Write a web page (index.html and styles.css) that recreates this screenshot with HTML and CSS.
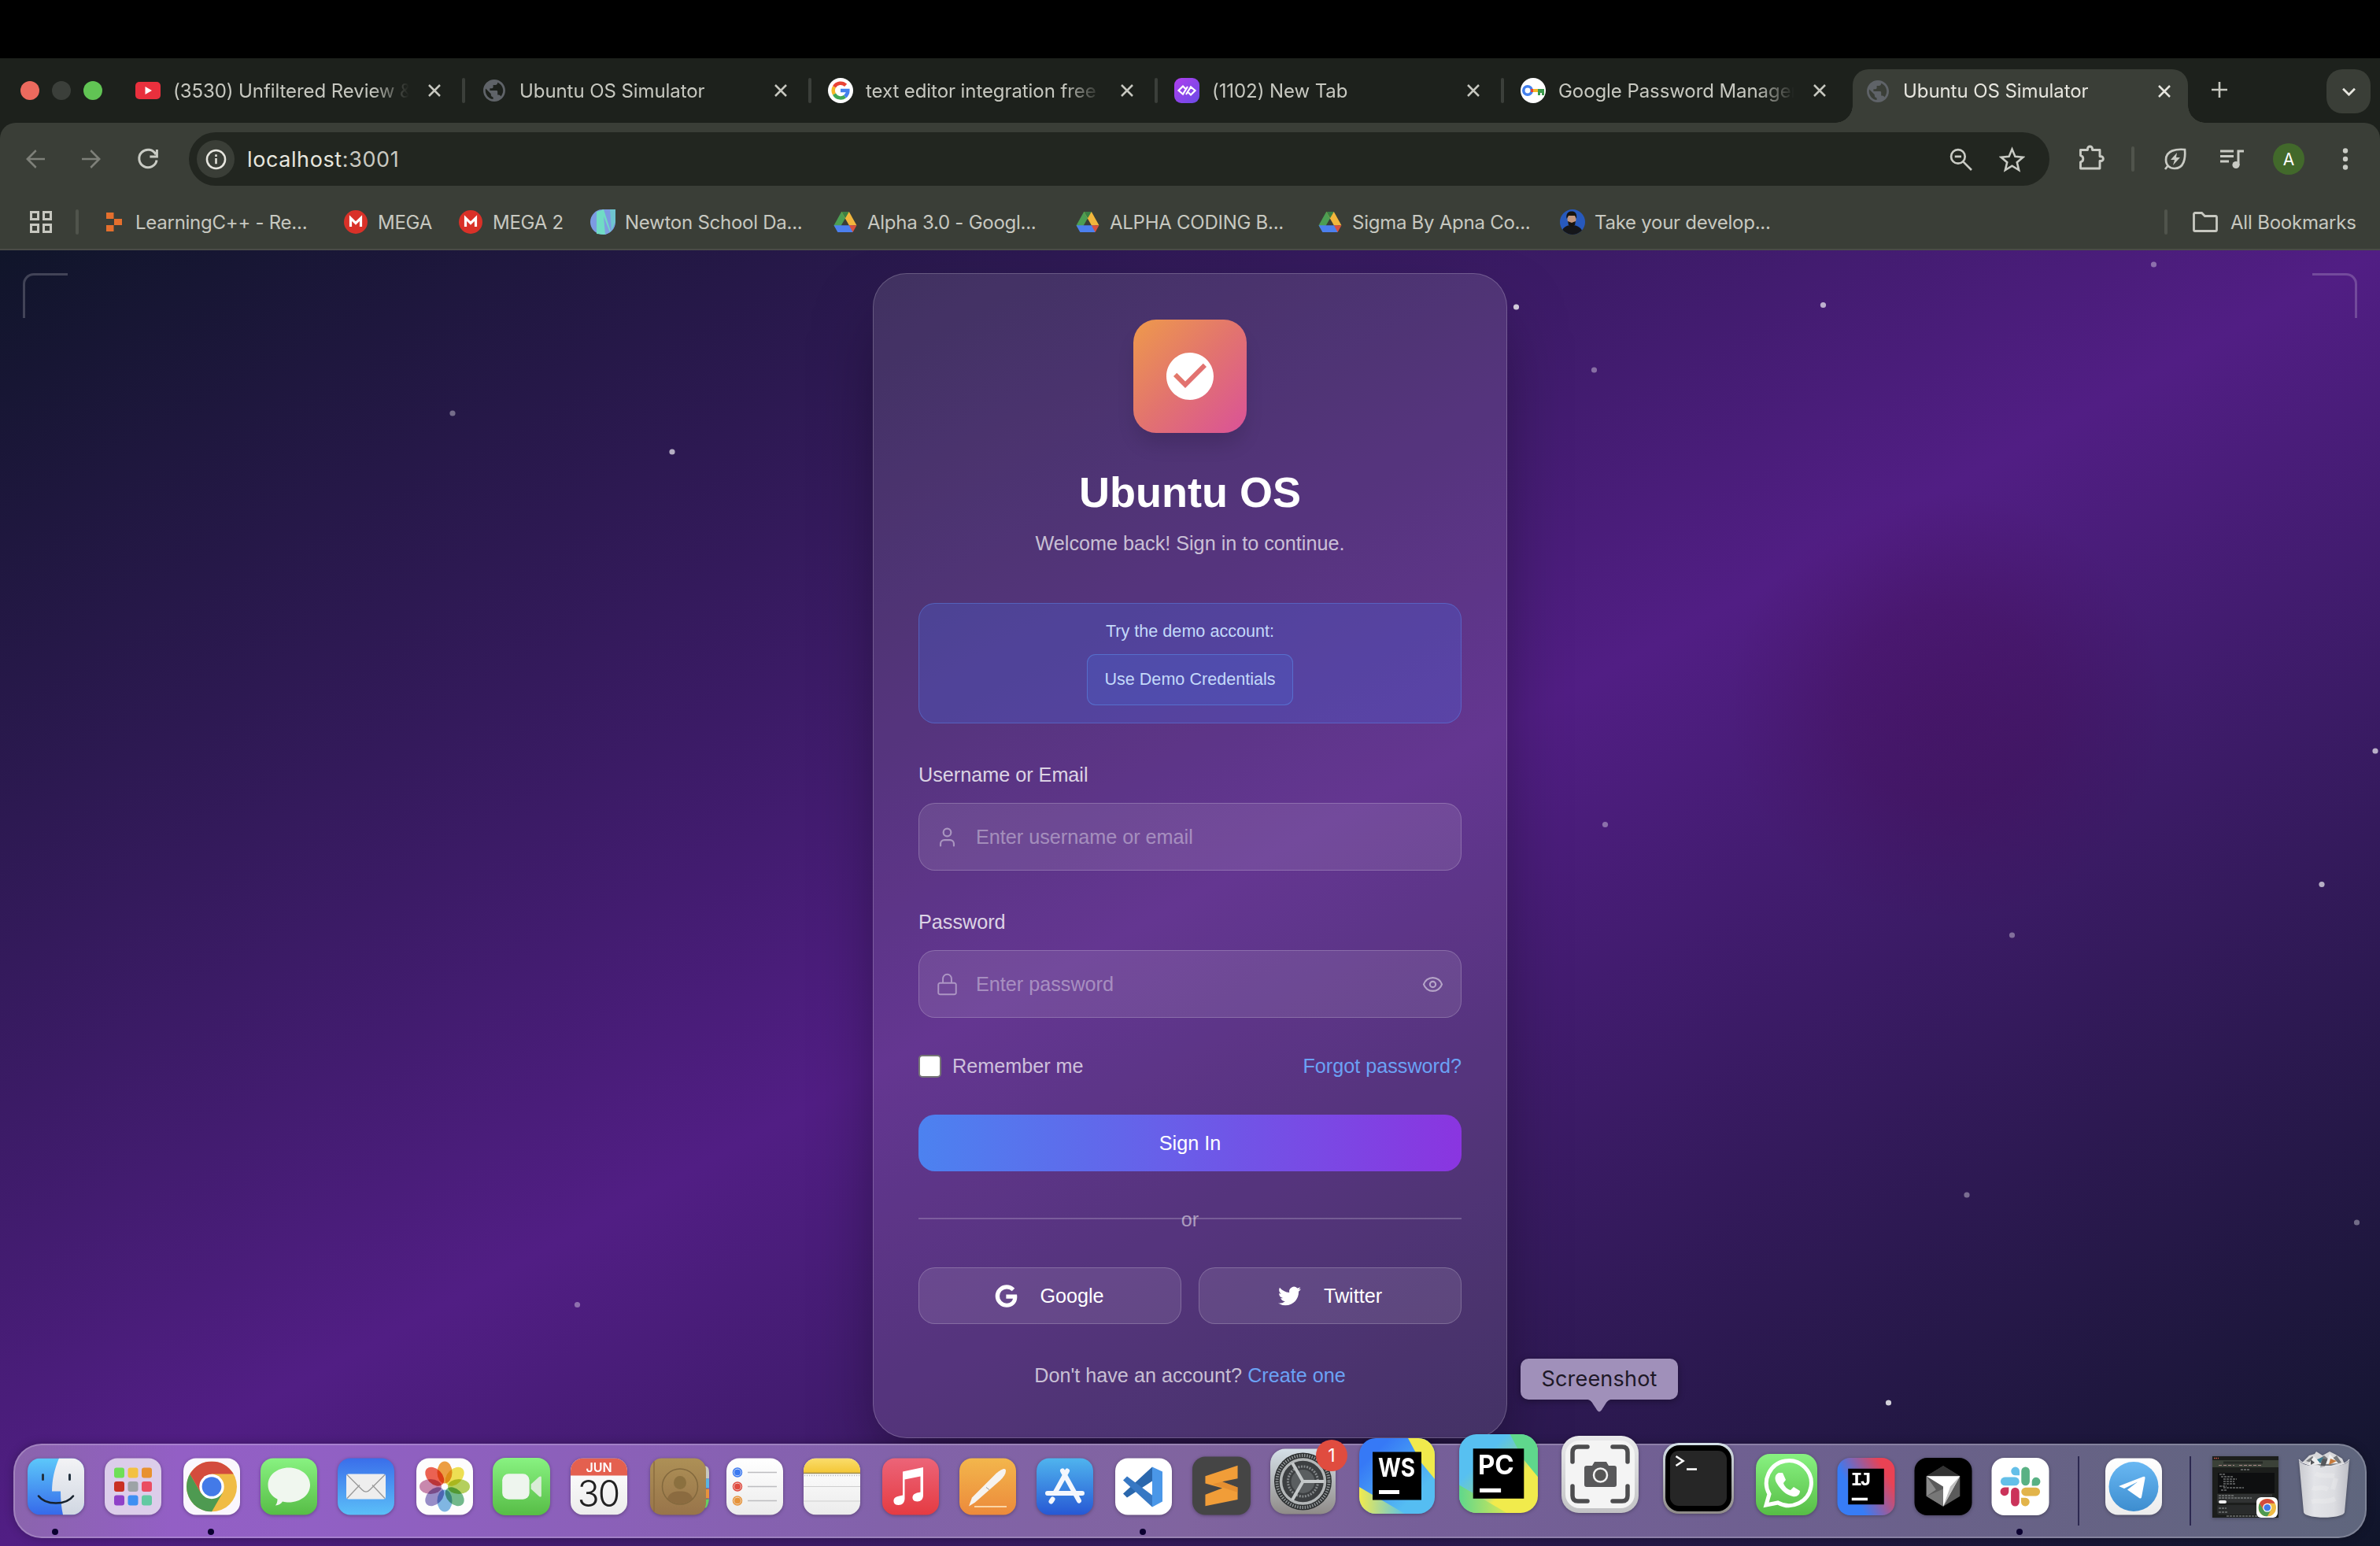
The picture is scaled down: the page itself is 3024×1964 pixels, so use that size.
FILE: index.html
```html
<!DOCTYPE html>
<html lang="en">
<head>
<meta charset="utf-8">
<title>Ubuntu OS Simulator</title>
<link rel="stylesheet" href="styles.css">
</head>
<body>
<svg class="defs" aria-hidden="true">
  <defs>
    <linearGradient id="gGreen" x1="0" y1="0" x2="0" y2="1"><stop offset="0" stop-color="#88f281"/><stop offset="1" stop-color="#57bd46"/></linearGradient>
    <linearGradient id="gMail" x1="0" y1="0" x2="0" y2="1"><stop offset="0" stop-color="#3a6eea"/><stop offset="1" stop-color="#5bbff8"/></linearGradient>
    <linearGradient id="gWhite" x1="0" y1="0" x2="0" y2="1"><stop offset="0" stop-color="#fff"/><stop offset="1" stop-color="#ececec"/></linearGradient>
    <linearGradient id="gFinder" x1="0" y1="0" x2="0" y2="1"><stop offset="0" stop-color="#5cc8fa"/><stop offset="1" stop-color="#3669ea"/></linearGradient>
    <linearGradient id="gFace" x1="0" y1="0" x2="0" y2="1"><stop offset="0" stop-color="#f3f3f5"/><stop offset="1" stop-color="#d0d7e2"/></linearGradient>
    <linearGradient id="gMusic" x1="0" y1="0" x2="0" y2="1"><stop offset="0" stop-color="#ec6478"/><stop offset="1" stop-color="#e53b42"/></linearGradient>
    <linearGradient id="gPages" x1="0" y1="0" x2="0" y2="1"><stop offset="0" stop-color="#f3b64c"/><stop offset="1" stop-color="#ec8a3b"/></linearGradient>
    <linearGradient id="gStore" x1="0" y1="0" x2="0" y2="1"><stop offset="0" stop-color="#4fb4ee"/><stop offset="1" stop-color="#2758d4"/></linearGradient>
    <linearGradient id="gBook" x1="0" y1="0" x2="0" y2="1"><stop offset="0" stop-color="#ad9056"/><stop offset="1" stop-color="#98744a"/></linearGradient>
    <linearGradient id="gNote" x1="0" y1="0" x2="0" y2="1"><stop offset="0" stop-color="#fadd6c"/><stop offset="1" stop-color="#f4c736"/></linearGradient>
    <linearGradient id="gMetal" x1="0" y1="0" x2="0" y2="1"><stop offset="0" stop-color="#d5e0e8"/><stop offset="1" stop-color="#8f8b88"/></linearGradient>
    <linearGradient id="gShot" x1="0" y1="0" x2="0" y2="1"><stop offset="0" stop-color="#e9e9eb"/><stop offset="1" stop-color="#c2c2c4"/></linearGradient>
    <linearGradient id="gWs" x1="0" y1="0" x2="1" y2="1"><stop offset=".2" stop-color="#3679f6"/><stop offset=".75" stop-color="#55bdf2"/></linearGradient>
    <linearGradient id="gWs2" x1="0" y1="0" x2="1" y2="0"><stop offset="0" stop-color="#f2eb4d"/><stop offset="1" stop-color="#5cc3e8"/></linearGradient>
    <linearGradient id="gPc" x1="0" y1="0" x2="1" y2="1"><stop offset=".3" stop-color="#57c0f1"/><stop offset=".5" stop-color="#7ad0b0"/><stop offset=".65" stop-color="#f1eb4c"/></linearGradient>
    <linearGradient id="gPc2" x1="0" y1="0" x2="1" y2="0"><stop offset="0" stop-color="#5fd78c"/><stop offset="1" stop-color="#d6e755"/></linearGradient>
    <linearGradient id="gIj" x1=".2" y1=".5" x2=".9" y2=".1"><stop offset="0" stop-color="#377cf6"/><stop offset=".85" stop-color="#ea4254"/></linearGradient>
    <linearGradient id="gTele" x1="0" y1="0" x2="0" y2="1"><stop offset="0" stop-color="#69b8f3"/><stop offset="1" stop-color="#3d8dcf"/></linearGradient>
    <linearGradient id="gCan" x1="0" y1="0" x2="1" y2="0"><stop offset="0" stop-color="#c9cacf"/><stop offset=".3" stop-color="#e3e4e8"/><stop offset=".7" stop-color="#dcdde1"/><stop offset="1" stop-color="#bdbec6"/></linearGradient>
    <linearGradient id="gNewTab" x1="0" y1="0" x2="1" y2="1"><stop offset="0" stop-color="#b03fee"/><stop offset="1" stop-color="#6a4be6"/></linearGradient>
    <symbol id="close" viewBox="0 0 20 20"><path d="M3 3l14 14M17 3L3 17" stroke="currentColor" stroke-width="2.5" fill="none"/></symbol>
    <symbol id="globe" viewBox="2 2 20 20"><path fill="#5f6368" d="M12 2C6.480 2 2 6.480 2 12s4.480 10 10 10 10-4.480 10-10S17.520 2 12 2zm-1 17.930c-3.950-.49-7-3.850-7-7.930 0-.62.08-1.210.21-1.790L9 15v1c0 1.100.9 2 2 2v1.930zm6.900-2.540c-.26-.81-1-1.390-1.900-1.390h-1v-3c0-.55-.45-1-1-1H8v-2h2c.55 0 1-.45 1-1V7h2c1.100 0 2-.9 2-2v-.41c2.930 1.190 5 4.060 5 7.410 0 2.080-.8 3.970-2.100 5.390z"/></symbol>
    <symbol id="drive" viewBox="0 0 30 27"><path fill="#4c9e53" d="M10 0h10L5 26 0 18z"/><path fill="#f2b63c" d="M10 0h10l10 18H20z"/><path fill="#4c80ee" d="M5 18h20v9H5L0 18z"/><path fill="#d9503f" d="M20 18h10l-5 9z"/><path fill="#3a7f43" d="M10 0h10l-5 8.500z"/></symbol>
    <symbol id="mega" viewBox="0 0 30 30"><circle cx="15" cy="15" r="15" fill="#d93128"/><path d="M8.500 21V10l6.500 6.500 6.500-6.500v11" fill="none" stroke="#fff" stroke-width="3.200"/></symbol>
    <symbol id="chrome" viewBox="2 2 44 44"><circle cx="24" cy="24" r="22" fill="#f0bc45"/><path fill="#4e9a51" d="M4.950 13L14.500 29.500 24 35 24 46A22 22 0 0 1 4.950 13z"/><path fill="#4e9a51" d="M24 46l9.500-16.500H14z"/><path fill="#d34c3d" d="M4.950 13A22 22 0 0 1 43.050 13H24l-9.500 16.500z"/><circle cx="24" cy="24" r="10.800" fill="#fff"/><circle cx="24" cy="24" r="8.500" fill="#437ae8"/></symbol>
  </defs>
</svg>

<header class="browser">
  <div class="tabstrip">
    <div class="lights"><i class="red"></i><i class="grey"></i><i class="green"></i></div>
    <div class="tab">
      <svg class="fav" viewBox="0 0 32 32"><rect y="5" width="32" height="22" rx="5" fill="#e9303d"/><path d="M12.500 11v10l8.500-5z" fill="#fff"/></svg>
      <span class="ttl">(3530) Unfiltered Review &amp;</span><svg class="x"><use href="#close"/></svg>
    </div>
    <div class="tab">
      <svg class="fav globe"><use href="#globe"/></svg>
      <span class="ttl">Ubuntu OS Simulator</span><svg class="x"><use href="#close"/></svg>
    </div>
    <div class="tab">
      <svg class="fav" viewBox="0 0 32 32"><circle cx="16" cy="16" r="16" fill="#fff"/><g fill="none" stroke-width="4.500"><path d="M22.600 9.400A9.300 9.300 0 0 0 8 11.400" stroke="#e94335"/><path d="M8 11.400a9.300 9.300 0 0 0 0 9.200" stroke="#f6b826"/><path d="M8 20.600a9.300 9.300 0 0 0 13.600 3" stroke="#40a856"/><path d="M21.600 23.600A9.300 9.300 0 0 0 25.300 16H16" stroke="#4381ee"/></g></svg>
      <span class="ttl">text editor integration free</span><svg class="x"><use href="#close"/></svg>
    </div>
    <div class="tab">
      <svg class="fav" viewBox="0 0 32 32"><rect width="32" height="32" rx="9" fill="url(#gNewTab)"/><path d="M17 11l-6 9.500L5.500 16l5.500-5.500 3 3M15 21l6-9.500 5.500 4.500-5.500 5.500-3-3" fill="none" stroke="#fff" stroke-width="2.200"/></svg>
      <span class="ttl">(1102) New Tab</span><svg class="x"><use href="#close"/></svg>
    </div>
    <div class="tab last">
      <svg class="fav" viewBox="0 0 32 32"><circle cx="16" cy="16" r="16" fill="#fff"/><circle cx="9" cy="16" r="5.200" fill="none" stroke="#4381ee" stroke-width="3.600"/><path fill="#e94335" d="M13 14h4v4h-4z"/><path fill="#f6b826" d="M16 14h7v4h-7z"/><path fill="#3c9a4c" d="M22 14h8v8h-3v-3h-2v3h-3z"/></svg>
      <span class="ttl">Google Password Manager</span><svg class="x"><use href="#close"/></svg>
    </div>
    <div class="tab active">
      <svg class="fav globe"><use href="#globe"/></svg>
      <span class="ttl">Ubuntu OS Simulator</span><svg class="x"><use href="#close"/></svg>
    </div>
    <svg class="plus" viewBox="0 0 20 20"><path d="M10 0v20M0 10h20" stroke="currentColor" stroke-width="2.600"/></svg>
    <div class="chev"><svg viewBox="0 0 16 10"><path d="M1 1.500l7 7 7-7" fill="none" stroke="currentColor" stroke-width="2.600"/></svg></div>
  </div>

  <div class="toolbar">
    <svg class="nav dim back" viewBox="0 0 24 24"><path fill="currentColor" d="M20 11.200H7.400l5.600-5.700L12 4l-8 8 8 8 1-1.500-5.600-5.700H20z"/></svg>
    <svg class="nav dim" viewBox="0 0 24 24"><path fill="currentColor" d="M4 11.200h12.600L11 5.500 12 4l8 8-8 8-1-1.500 5.600-5.700H4z"/></svg>
    <svg class="nav" viewBox="0 0 24 24"><path d="M18.700 8.200A7.500 7.500 0 1 0 19.400 13M19.600 4v6h-6" fill="none" stroke="currentColor" stroke-width="2"/></svg>
    <div class="omnibox">
      <span class="info"><svg viewBox="0 0 28 28"><circle cx="14" cy="14" r="12" fill="none" stroke="currentColor" stroke-width="2.600"/><path d="M14 12.500v7.500M14 7.600v2.800" stroke="currentColor" stroke-width="2.600"/></svg></span>
      <span class="url"><b>localhost</b>:3001</span>
      <svg class="zoomi" viewBox="0 0 28 28"><circle cx="10.500" cy="10.500" r="8.500" fill="none" stroke="currentColor" stroke-width="2.600"/><path d="M17 17l10 10M6.500 10.500h8" stroke="currentColor" stroke-width="2.600"/></svg>
      <svg class="star" viewBox="0 0 32 32"><path d="M16 3.500l3.800 9 9.700.8-7.400 6.400 2.300 9.500L16 24l-8.400 5.200 2.300-9.500-7.400-6.400 9.700-.8z" fill="none" stroke="currentColor" stroke-width="2.500"/></svg>
    </div>
    <svg class="puzzle" viewBox="0 0 34 34"><path d="M3.500 7.500h9V6a3 3 0 0 1 6 0v1.500H28v8.300h1.500a2.800 2.800 0 0 1 0 5.700H28v9.500H3.500v-8.200a4.200 4.200 0 0 0 0-8.200z" fill="none" stroke="currentColor" stroke-width="2.900" stroke-linejoin="round"/></svg>
    <i class="vsep"></i>
    <svg class="leaf" viewBox="0 0 32 32"><path d="M28 4C17 3 4 5 4 17c0 7 5 11 11 11 12 0 14-13 13-24zM7 24l-4 5" fill="none" stroke="currentColor" stroke-width="2.700"/><path d="M18 8l-8 9h5l-2 7 9-10h-5z" fill="currentColor"/></svg>
    <svg class="queue" viewBox="0 0 32 32"><path d="M1 6h17M1 12.500h17M1 19h11M24 24V6h7" fill="none" stroke="currentColor" stroke-width="3"/><circle cx="21" cy="23.500" r="4.600" fill="currentColor"/></svg>
    <span class="avatar">A</span>
    <svg class="dots" viewBox="0 0 8 28"><circle cx="4" cy="3.500" r="3.200"/><circle cx="4" cy="14" r="3.200"/><circle cx="4" cy="24.500" r="3.200"/></svg>
  </div>

  <div class="bookmarks">
    <svg class="apps" viewBox="0 0 28 28"><path d="M1.500 1.500h9v9h-9zM17.500 1.500h9v9h-9zM1.500 17.500h9v9h-9zM17.500 17.500h9v9h-9z" fill="none" stroke="currentColor" stroke-width="3"/></svg>
    <i class="vsep"></i>
    <div class="bm b1"><svg viewBox="0 0 20 24"><path fill="#e46f2d" d="M0 0h9.500v8H0zM10 8h10v8H10zM0 16h9.500v8H0z"/></svg><span>LearningC++ - Re...</span></div>
    <div class="bm b2"><svg><use href="#mega"/></svg><span>MEGA</span></div>
    <div class="bm b3"><svg><use href="#mega"/></svg><span>MEGA 2</span></div>
    <div class="bm b4"><svg viewBox="0 0 32 32"><path fill="#7c9be2" d="M0 16A16 16 0 0 1 16 0h16v16a16 16 0 0 1-32 0z"/><path fill="#70dcc5" d="M8 3l9-3 9 28-8 4-10-1z"/><path fill="#7f9fe0" d="M17 9l8 20-6 3z"/><path fill="#6ec4cf" d="M25 0h7v16l-5 11z"/></svg><span>Newton School Da...</span></div>
    <div class="bm b5"><svg><use href="#drive"/></svg><span>Alpha 3.0 - Googl...</span></div>
    <div class="bm b6"><svg><use href="#drive"/></svg><span>ALPHA CODING B...</span></div>
    <div class="bm b7"><svg><use href="#drive"/></svg><span>Sigma By Apna Co...</span></div>
    <div class="bm b8"><svg viewBox="0 0 32 32"><clipPath id="face"><circle cx="16" cy="16" r="16"/></clipPath><g clip-path="url(#face)"><path fill="#2759bd" d="M0 0h32v32H0z"/><path fill="#15161a" d="M2 32c0-9 6-12 13-12s14 3 14 12z"/><ellipse cx="15" cy="12.500" rx="5.500" ry="7.500" fill="#c3977f"/><path fill="#17130f" d="M8.500 12c-1-7 2-9.500 6.500-9.500S22 5 21 12l-2-4h-8zM10 15l5 2 5-2-1 5-4 2-4-2z"/></g></svg><span>Take your develop...</span></div>
    <i class="vsep end"></i>
    <svg class="folder" viewBox="0 0 32 26"><path d="M1.500 3a1.500 1.500 0 0 1 1.500-1.500h8.500l4 4H29A1.500 1.500 0 0 1 30.500 7v16a1.500 1.500 0 0 1-1.500 1.500H3A1.500 1.500 0 0 1 1.500 23z" fill="none" stroke="currentColor" stroke-width="2.800"/></svg>
    <span class="all">All Bookmarks</span>
  </div>
</header>

<main class="page">
  <i class="blob"></i>
  <i class="corner tl"></i><i class="corner tr"></i>
  <svg class="stars" viewBox="0 0 3024 1646"><g fill="#fff"><g opacity=".8"><circle cx="1926.500" cy="72" r="3.600"/><circle cx="2399.500" cy="1464" r="3.600"/></g><g opacity=".65"><circle cx="2316.500" cy="69.500" r="3.600"/><circle cx="3018" cy="636" r="3.600"/><circle cx="2950" cy="805.500" r="3.600"/><circle cx="854" cy="256" r="3.600"/></g><g opacity=".37"><circle cx="575" cy="207" r="3.600"/><circle cx="733.500" cy="1339.500" r="3.600"/><circle cx="2025.500" cy="152" r="3.600"/><circle cx="2736.500" cy="18" r="3.600"/><circle cx="2039.500" cy="729.500" r="3.600"/><circle cx="2556.500" cy="870" r="3.600"/><circle cx="2499" cy="1200" r="3.600"/><circle cx="2994.500" cy="1235" r="3.600"/></g></g></svg>

  <form class="card">
    <div class="logo"><svg viewBox="0 0 24 24"><path fill="#fff" d="M12 2C6.480 2 2 6.480 2 12s4.480 10 10 10 10-4.480 10-10S17.520 2 12 2zm-2 15l-5-5 1.410-1.410L10 14.170l7.590-7.590L19 8l-9 9z"/></svg></div>
    <h1>Ubuntu OS</h1>
    <p class="sub">Welcome back! Sign in to continue.</p>
    <div class="demo"><p>Try the demo account:</p><div class="demo-btn">Use Demo Credentials</div></div>
    <div class="label">Username or Email</div>
    <div class="field"><svg viewBox="0 0 24 24"><path d="M16 7a4 4 0 11-8 0 4 4 0 018 0zM5 21v-2a4 4 0 014-4h6a4 4 0 014 4v2"/></svg><span>Enter username or email</span></div>
    <div class="label">Password</div>
    <div class="field"><svg class="lock" viewBox="0 0 24 24"><path d="M12 1.500a4.500 4.500 0 00-4.500 4.500V10.500h9V6A4.500 4.500 0 0012 1.500zM4.500 10.500h15a1.800 1.800 0 011.800 1.800v8.500a1.800 1.800 0 01-1.800 1.800h-15a1.800 1.800 0 01-1.800-1.800v-8.500a1.800 1.800 0 011.800-1.800z"/></svg><span>Enter password</span><svg class="eye" viewBox="0 0 24 24"><path d="M15 12a3 3 0 11-6 0 3 3 0 016 0z M2.458 12C3.732 7.943 7.523 5 12 5c4.478 0 8.268 2.943 9.542 7-1.274 4.057-5.064 7-9.542 7-4.477 0-8.268-2.943-9.542-7z"/></svg></div>
    <div class="row"><i class="check"></i><span>Remember me</span><a>Forgot password?</a></div>
    <div class="signin">Sign In</div>
    <div class="or"><span>or</span></div>
    <div class="social">
      <div><svg viewBox="0 0 24 24"><path stroke="#fff" stroke-width="1.200" d="M12.480 10.920v3.280h7.840c-.24 1.840-.853 3.187-1.787 4.133-1.147 1.147-2.933 2.400-6.053 2.400-4.827 0-8.600-3.893-8.600-8.720s3.773-8.720 8.600-8.720c2.600 0 4.507 1.027 5.907 2.347l2.307-2.307C18.747 1.440 16.133 0 12.480 0 5.867 0 .307 5.387.307 12s5.560 12 12.173 12c3.573 0 6.267-1.173 8.373-3.360 2.160-2.160 2.840-5.213 2.840-7.667 0-.76-.053-1.467-.173-2.053H12.480z"/></svg><span>Google</span></div>
      <div><svg class="tw" viewBox="0 0 24 24"><path d="M23.953 4.570a10 10 0 01-2.825.775 4.958 4.958 0 002.163-2.723c-.951.555-2.005.959-3.127 1.184a4.920 4.920 0 00-8.384 4.482C7.690 8.095 4.067 6.130 1.640 3.162a4.822 4.822 0 00-.666 2.475c0 1.710.87 3.213 2.188 4.096a4.904 4.904 0 01-2.228-.616v.06a4.923 4.923 0 003.946 4.827 4.996 4.996 0 01-2.212.085 4.936 4.936 0 004.604 3.417 9.867 9.867 0 01-6.102 2.105c-.39 0-.779-.023-1.170-.067a13.995 13.995 0 007.557 2.209c9.053 0 13.998-7.496 13.998-13.985 0-.21 0-.42-.015-.63A9.935 9.935 0 0024 4.590z"/></svg><span>Twitter</span></div>
    </div>
    <p class="foot">Don't have an account? <a>Create one</a></p>
  </form>
</main>

<div class="tip">Screenshot<svg viewBox="0 0 36 16"><path d="M0 0c8 0 9 5 12 9 2 3 4 7 6 7s4-4 6-7c3-4 4-9 12-9z"/></svg></div>

<nav class="dock">
  <div class="app g16"><svg viewBox="0 0 72 72"><clipPath id="sq"><rect width="72" height="72" rx="16"/></clipPath><g clip-path="url(#sq)"><path fill="url(#gFinder)" d="M0 0h72v72H0z"/><path fill="url(#gFace)" d="M40 0c-6 14-9 28-9 42h11c0 11 1 21 3 30h27V0z"/><path d="M19.500 21v6M53.500 21v6" stroke="#23323f" stroke-width="3" stroke-linecap="round"/><path d="M14 48c9 12 35 12 44 0" fill="none" stroke="#17222d" stroke-width="2.600" stroke-linecap="round"/></g></svg><i class="run"></i></div>
  <div class="app g26"><svg viewBox="0 0 72 72"><rect width="72" height="72" rx="16" fill="#dccdea"/><g><rect x="12" y="12" width="13" height="13" rx="3" fill="#6fdf57"/><rect x="29.500" y="12" width="13" height="13" rx="3" fill="#f3c142"/><rect x="47" y="12" width="13" height="13" rx="3" fill="#e8912f"/><rect x="12" y="29.500" width="13" height="13" rx="3" fill="#c93024"/><rect x="29.500" y="29.500" width="13" height="13" rx="3" fill="#9da3a6"/><rect x="47" y="29.500" width="13" height="13" rx="3" fill="#ea4d62"/><rect x="12" y="47" width="13" height="13" rx="3" fill="#8f40c8"/><rect x="29.500" y="47" width="13" height="13" rx="3" fill="#3d8ff2"/><rect x="47" y="47" width="13" height="13" rx="3" fill="#63c9a2"/></g></svg></div>
  <div class="app g28"><svg viewBox="0 0 72 72"><rect width="72" height="72" rx="16" fill="#faf7fd"/><use href="#chrome" x="4" y="4" width="64" height="64"/></svg><i class="run"></i></div>
  <div class="app g26"><svg viewBox="0 0 72 72"><rect width="72" height="72" rx="16" fill="url(#gGreen)"/><path fill="#f0f7ef" d="M36 12c15 0 27 9.500 27 22S51 56 36 56c-3 0-5-.3-8-1-2 3-5 4.500-9 5 2-3 2.500-5 2.500-8C14 48 9.500 42 9.500 34 9.500 21.500 21 12 36 12z"/></svg></div>
  <div class="app g26"><svg viewBox="0 0 72 72"><rect width="72" height="72" rx="16" fill="url(#gMail)"/><rect x="11" y="20" width="50" height="32" rx="3" fill="#eee"/><path d="M12 51l16-17M60 51L44 34M12 21l19 19c3 3.500 7 3.500 10 0l19-19" fill="none" stroke="#999" stroke-width="1.300"/></svg></div>
  <div class="app g28"><svg viewBox="0 0 72 72"><rect width="72" height="72" rx="16" fill="#fdfdfd"/><g class="petals" transform="translate(36 36)"><ellipse cy="-18" rx="9.500" ry="14" fill="#ee9a38"/><ellipse cy="-18" rx="9.500" ry="14" fill="#efe049" transform="rotate(45)"/><ellipse cy="-18" rx="9.500" ry="14" fill="#b2cf55" transform="rotate(90)"/><ellipse cy="-18" rx="9.500" ry="14" fill="#6bb886" transform="rotate(135)"/><ellipse cy="-18" rx="9.500" ry="14" fill="#7ab4e3" transform="rotate(180)"/><ellipse cy="-18" rx="9.500" ry="14" fill="#9488c6" transform="rotate(225)"/><ellipse cy="-18" rx="9.500" ry="14" fill="#c783ab" transform="rotate(270)"/><ellipse cy="-18" rx="9.500" ry="14" fill="#ec5a48" transform="rotate(315)"/></g></svg></div>
  <div class="app facetime"><svg viewBox="0 0 72 72"><rect width="72" height="72" rx="16" fill="url(#gGreen)"/><rect x="12" y="20" width="34" height="32" rx="8" fill="#eef5ee"/><path d="M48 33l10-9c2-1.500 3-1 3 1v22c0 2-1 2.500-3 1l-10-9z" fill="#d9ecd7"/></svg></div>
  <div class="app g26"><svg viewBox="0 0 72 72"><g clip-path="url(#sq)"><path fill="url(#gWhite)" d="M0 0h72v72H0z"/><path fill="#e4604f" d="M0 0h72v22H0z"/></g><text x="36" y="17" class="cal-m">JUN</text><text x="35" y="61" class="cal-d">30</text></svg></div>
  <div class="app contacts"><svg viewBox="0 0 75 72"><path fill="#c8c8c0" d="M68 10h3q4 1 4 8v8h-7z"/><path fill="#58b4e4" d="M68 26h7v12h-7z"/><path fill="#e8923c" d="M68 39h7v12h-7z"/><path fill="#65cf62" d="M68 52h7q-1 8-4 11h-3z"/><rect width="71" height="72" rx="15" fill="url(#gBook)"/><path d="M5 4v64" stroke="#8b6c3f" stroke-width="1.500"/><circle cx="38" cy="36" r="22.500" fill="none" stroke="#82683d" stroke-width="1.500"/><ellipse cx="38" cy="31" rx="8" ry="8.500" fill="#8b703f"/><path fill="#8b6b40" d="M22 51c3-8 9-9 16-9s13 1 16 9c-8 9-24 9-32 0z"/></svg></div>
  <div class="app reminders"><svg viewBox="0 0 72 72"><rect width="72" height="72" rx="16" fill="url(#gWhite)"/><g stroke-width="1.500" fill="none"><circle cx="14" cy="18" r="5.500" stroke="#3b79f0"/><circle cx="14" cy="36" r="5.500" stroke="#df4b40"/><circle cx="14" cy="54" r="5.500" stroke="#e6933a"/></g><circle cx="14" cy="18" r="4" fill="#3b79f0"/><circle cx="14" cy="36" r="4" fill="#df4b40"/><circle cx="14" cy="54" r="4" fill="#e6933a"/><path d="M27 18h37M27 36h37M27 54h37" stroke="#bdbdc0" stroke-width="1.600"/></svg></div>
  <div class="app g26"><svg viewBox="0 0 72 72"><g clip-path="url(#sq)"><path fill="url(#gWhite)" d="M0 0h72v72H0z"/><path fill="url(#gNote)" d="M0 0h72v18.500H0z"/></g><path d="M0 19h72" stroke="#9d8a4c" stroke-width="1.500"/><path d="M1 22h70" stroke="#bbb" stroke-dasharray="1.200 1.800" stroke-width="1.500"/><path d="M0 36h72M0 54.500h72" stroke="#cfcfcf" stroke-width="1.200"/></svg></div>
  <div class="app g28"><svg viewBox="0 0 72 72"><rect width="72" height="72" rx="16" fill="url(#gMusic)"/><path fill="#fff" d="M26 17l26-5.500V47c0 5-3 8-7.500 8S38 52 38.500 49c.8-4 5-5 10-6V23l-20 4v24c0 5-3 8.500-8 8.500S14 56 14.500 53c1-4 5-4.500 11.500-6z"/></svg></div>
  <div class="app g26"><svg viewBox="0 0 72 72"><rect width="72" height="72" rx="16" fill="url(#gPages)"/><path fill="#f6f3ef" d="M12 61l4-11 31-31c6-5 12-8 12-3 0 4-3 8-7 12L20 56z"/><path d="M34 37l4 3" stroke="#999"/><path d="M19 61.500h41" stroke="#fbd5a5" stroke-width="2"/></svg></div>
  <div class="app g26"><svg viewBox="0 0 72 72"><rect width="72" height="72" rx="16" fill="url(#gStore)"/><g stroke="#f4f7fd" stroke-width="6" stroke-linecap="round"><path d="M39 16L24 43M33 16l21 38M14 44.500h44M20.500 52l-2 3"/></g></svg></div>
  <div class="app g28"><svg viewBox="0 0 72 72"><rect width="72" height="72" rx="16" fill="#fff"/><path fill="#2a67ad" d="M10 45l37-34v18L15 50z"/><path fill="#3778c4" d="M10 28l5-5 32 24v15z"/><path fill="#4a97e8" d="M47 11l13 6v38l-13 7z"/></svg><i class="run"></i></div>
  <div class="app sublime"><svg viewBox="0 0 72 72"><rect width="72" height="72" rx="16" fill="#454545"/><path fill="#f19d38" d="M16 24l40-13v16L37 31l19 7v15L16 61V47l21-8-21-6z"/><path fill="#d9822a" d="M37 31l19 7v6L25 34z" opacity=".5"/></svg></div>
  <div class="app settings"><svg viewBox="0 0 83 83"><rect width="83" height="83" rx="19" fill="url(#gMetal)"/><circle cx="41.500" cy="41.500" r="36.500" fill="#2c2f30"/><circle cx="41.500" cy="41.500" r="33" fill="none" stroke="#8d9294" stroke-width="4" stroke-dasharray="1.600 1.600"/><circle cx="41.500" cy="41.500" r="28" fill="#3c3f41" stroke="#b3b7b8" stroke-width="3.500"/><circle cx="41.500" cy="41.500" r="19" fill="none" stroke="#85898b" stroke-width="3" stroke-dasharray="2 1.600"/><circle cx="41.500" cy="41.500" r="15" fill="#5a5e60"/><path d="M41.500 41.500h27M41.500 41.500L28 18M41.500 41.500L28 65" stroke="#c4c8c9" stroke-width="4"/></svg><b class="badge">1</b></div>
  <div class="app ws"><svg viewBox="0 0 96 96"><clipPath id="sqb"><rect width="96" height="96" rx="21"/></clipPath><g clip-path="url(#sqb)"><path fill="url(#gWs)" d="M0 0h96v96H0z"/><path fill="#f0ea4c" d="M62 0h34v52L78 30z"/><path fill="url(#gWs2)" d="M0 62l58 34H0z"/></g><path d="M17 17.500h62v61H17z"/><text x="24" y="48.500" class="jb" textLength="47" lengthAdjust="spacingAndGlyphs">WS</text><path fill="#fff" d="M25 66h26v5H25z"/></svg></div>
  <div class="app pc"><svg viewBox="0 0 96 96"><g clip-path="url(#sqb)"><path fill="url(#gPc)" d="M0 0h96v96H0z"/><path fill="#5fd78c" d="M62 0h34v52L78 30z"/><path fill="url(#gPc2)" d="M0 62l58 34H0z"/></g><path d="M17 17.500h62v61H17z"/><text x="23" y="49" class="jb" textLength="44" lengthAdjust="spacingAndGlyphs">PC</text><path fill="#fff" d="M25 66h26v5H25z"/></svg></div>
  <div class="app shot"><svg viewBox="0 0 98 98"><rect width="98" height="98" rx="22" fill="url(#gShot)"/><rect x="5" y="6" width="88" height="86" rx="18" fill="#f4f4f4"/><path d="M14 33V21q0-7 7-7h12M65 14h12q7 0 7 7v12M84 64v12q0 7-7 7H65M33 83H21q-7 0-7-7V64" fill="none" stroke="#4d4d4f" stroke-width="5.500" stroke-linecap="round"/><path fill="#58585a" d="M32 38h7l3-5h15l3 5h7q3 0 3 3v21q0 3-3 3H32q-3 0-3-3V41q0-3 3-3z"/><circle cx="49.500" cy="50" r="8.500" fill="#555" stroke="#f2f2f2" stroke-width="2.500"/></svg></div>
  <div class="app term"><svg viewBox="0 0 90 90"><rect width="90" height="90" rx="20" fill="url(#gMetal)"/><rect x="3" y="3" width="84" height="84" rx="18"/><rect x="9" y="10" width="72" height="70" rx="11" fill="#262626"/><path d="M16.500 17l9 6-9 6" fill="none" stroke="#fff" stroke-width="2.600"/><path d="M30 33.500h13" stroke="#fff" stroke-width="2.600"/></svg></div>
  <div class="app whats"><svg viewBox="0 0 78 78"><rect width="78" height="78" rx="18" fill="url(#gGreen)"/><path fill="none" stroke="#fff" stroke-width="5" d="M13 65l4-14A28.500 28.500 0 1 1 28 62z"/><path fill="#fff" d="M29 24c-5 2-6 8-2 14 5 8 11 14 20 16 5 1 9-2 9-7l-8-5-4 4c-4-1-8-5-9-9l3-4-4-9z"/></svg></div>
  <div class="app ij"><svg viewBox="0 0 72 72"><rect width="72" height="72" rx="16" fill="url(#gIj)"/><path d="M13.500 13.500h45v45h-45z"/><g fill="#fff"><text x="17" y="35" class="ijt">IJ</text><path d="M18 50h20v3.500H18z"/></g></svg></div>
  <div class="app g24"><svg viewBox="0 0 72 72"><rect width="72" height="72" rx="16"/><path fill="#5b5b5b" d="M36 10l21 13v25L36 61 15 48V23z"/><path fill="#333" d="M36 10l21 13H15z"/><path fill="#8a8a8a" d="M15 23l12 17-12 8z"/><path fill="#777" d="M15 48l21-9v22z"/><path fill="#fff" d="M15 23h42L36 61V36z"/><path fill="#bdbdbd" d="M45 36L36 61l21-38z"/></svg></div>
  <div class="app g24"><svg viewBox="0 0 72 72"><rect width="72" height="72" rx="16" fill="#fff"/><g stroke-width="10.500" stroke-linecap="round"><path d="M42.500 16.500v13" stroke="#59b184"/><path d="M16.500 29.500h13" stroke="#64bfe8"/><path d="M29.500 42.500v13" stroke="#cb335a"/><path d="M42.500 42.500h13" stroke="#e2b44a"/></g><path fill="#64bfe8" d="M35 22h-5a5.300 5.300 0 1 1 5-5z"/><path fill="#59b184" d="M50.500 35v-5.500a5.300 5.300 0 1 1 5.300 5.500z"/><path fill="#e2b44a" d="M37 50h5.500a5.300 5.300 0 1 1-5.500 5z"/><path fill="#cb335a" d="M21.500 37v5.500a5.300 5.300 0 1 1-5.300-5.500z"/></svg><i class="run"></i></div>
  <i class="dsep s1"></i>
  <div class="app tele"><svg viewBox="0 0 72 72"><rect width="72" height="72" rx="16" fill="url(#gWhite)"/><circle cx="36" cy="36" r="31.500" fill="url(#gTele)"/><path fill="#fff" d="M17 35.500l31-12q3-1 2.500 2L46 49.500q-.7 2.500-3 1L28 40l13-10-17 8.500z"/></svg></div>
  <i class="dsep s2"></i>
  <div class="app thumb"><svg viewBox="0 0 84 78"><path fill="#1c1e1c" d="M0 0h84v78H0z"/><path fill="#3b4138" d="M0 5h84v9H0z"/><path fill="#242824" d="M14 6.500h50v3H14z"/><path fill="#0e0f10" d="M7 21h72v26H7z"/><path fill="#303232" d="M6 48h70v11H6z"/><rect x="6" y="62" width="64" height="12" rx="2" fill="#292b2b"/><g fill="none" stroke="#989c9b" stroke-width="1" stroke-dasharray="3 1"><path d="M36 17h11M9 23h8M11 26h15M14 29h17M14 32h14M14 35h15M9 38h9M14 40h26M11 43h8M8 50h19M8 53h42M8 66h10M8 71h11M18 76h40"/></g><rect x="8" y="56" width="10" height="4" rx="2" fill="#eee"/><path d="M2 2.500h6" stroke="#d05a4d" stroke-dasharray="1.500 1" stroke-width="1.500"/><path d="M8 11.500h20M34 11.500h28" stroke="#a88" stroke-dasharray="4 2"/><rect x="56" y="52" width="27" height="26" rx="6" fill="#fff"/><use href="#chrome" x="58.500" y="54" width="22.500" height="22.500"/></svg></div>
  <div class="app trash"><svg viewBox="0 0 66 84"><path fill="#d8d8da" d="M5 14L14 5l7-2 2-3 8 5 9-5 8 4 8 5 3 7-28 8z"/><path fill="#77797c" d="M10 12l8-6 6 5 9-6 7 6 9-6 6 9-20 6z"/><path fill="url(#gCan)" d="M1 11c3 4 8 6 14 7h36c6-1 11-3 14-7l-6 66c-1 9-51 9-52 0z"/><path fill="#efefef" d="M12 17l8-11 10 10zM35 16l5-13 11 12z"/><path fill="#3b7d93" d="M24 10l8-3-4 8z"/><path fill="#c77b3d" d="M41 9l8 3-10 5z"/><path fill="#55575b" d="M31 9l6 1-3 9-6 1zM16 10l5 4-5 3z"/><path d="M22 28c8 5 16 1 24 3M18 46c6 3 10-3 20 2M17 64c9-4 16 3 30-4M48 34l-4 14" fill="none" stroke="#f1f1f3" stroke-width="6" opacity=".3"/><path d="M1 10c8 12 56 12 64 0" fill="none" stroke="#e6e6ea" stroke-width="1.200"/></svg></div>
</nav>
</body>
</html>
```

FILE: styles.css
```css
* { box-sizing: border-box; margin: 0; padding: 0; }
body {
  width: 3024px; height: 1964px; overflow: hidden; position: relative;
  background: #000; padding-top: 74px;
  display: flex; flex-direction: column;
  font-family: Inter, "Noto Sans", sans-serif;
}
svg { display: block; flex: none; }
i { display: block; flex: none; }
.defs { position: absolute; width: 0; height: 0; }

/* Browser chrome */
.browser { flex: none; height: 244px; background: #1d211c; color: #c7c8c0; display: flex; flex-direction: column; }
.tabstrip { height: 82px; display: flex; align-items: flex-start; padding-left: 26px; }
.lights { flex: none; display: flex; gap: 16px; margin-top: 29px; width: 146px; }
.lights i { width: 24px; height: 24px; border-radius: 50%; }
.lights .red { background: #ec6a5e; }
.lights .grey { background: #3b3f3a; }
.lights .green { background: #61c454; }
.tab { flex: none; width: 440px; height: 82px; display: flex; align-items: center; position: relative; font-size: 24px; }
.tab .fav { width: 32px; height: 32px; }
.tab .fav.globe { width: 28px; height: 28px; margin: 0 2px; }
.ttl {
  flex: none; margin-left: 16px; width: 301px; white-space: nowrap; letter-spacing: -.08px;
  -webkit-mask-image: linear-gradient(90deg, #000 252px, transparent 300px);
  mask-image: linear-gradient(90deg, #000 252px, transparent 300px);
}
.tab .x { width: 20px; height: 20px; margin-left: 21px; }
.tab:not(.last):not(.active)::after { content: ""; width: 4px; height: 32px; border-radius: 2px; background: #3b3f3a; margin-left: 25px; }
.tab.last { width: 422px; }
.tab.active { width: 426px; height: 68px; margin-top: 14px; padding-left: 16px; padding-bottom: 13px; background: #3a3e37; color: #e7e6df; border-radius: 20px 20px 0 0; }
.tab.active::before, .tab.active::after { content: ""; position: absolute; bottom: 0; width: 22px; height: 22px; margin: 0; }
.tab.active::before { left: -22px; background: radial-gradient(circle at 0 0, transparent 21.5px, #3a3e37 22px); }
.tab.active::after { right: -22px; background: radial-gradient(circle at 100% 0, transparent 21.5px, #3a3e37 22px); }
.plus { width: 20px; height: 20px; margin: 30px 0 0 30px; }
.chev { width: 56px; height: 56px; border-radius: 20px; background: #3a3e37; margin: 14px 12px 0 auto; display: grid; place-items: center; color: #e7e6df; }
.chev svg { width: 17px; height: 11px; }

.toolbar { height: 92px; background: #3a3e37; border-radius: 20px 20px 0 0; display: flex; align-items: center; padding: 0 0 0 27px; color: #c9cbc4; }
.nav { width: 36px; height: 36px; margin-right: 36px; }
.nav.dim { color: #7e8079; }
.nav.back { margin-right: 35px; }
.toolbar .nav:nth-of-type(3) { margin-right: 34px; }
.omnibox { width: 2364px; height: 68px; border-radius: 34px; background: #222620; display: flex; align-items: center; padding-left: 10px; }
.info { width: 48px; height: 48px; border-radius: 50%; background: #3a3e37; display: grid; place-items: center; color: #e7e6df; }
.info svg { width: 27px; height: 27px; }
.url { font-size: 27px; margin-left: 16px; letter-spacing: .6px; color: #c9c9c1; }
.url b { font-weight: 400; color: #e7e6df; }
.zoomi { width: 29px; height: 29px; margin-left: auto; }
.star { width: 33px; height: 33px; margin: 0 31px 0 34px; }
.puzzle { width: 34px; height: 34px; margin-left: 36px; margin-top: -5px; }
.vsep { width: 4px; height: 32px; border-radius: 2px; background: #50544c; }
.toolbar .vsep { margin: 0 0 0 34px; }
.leaf { width: 32px; height: 32px; margin-left: 36px; }
.queue { width: 32px; height: 32px; margin-left: 40px; }
.avatar { width: 40px; height: 40px; border-radius: 50%; background: #42692b; color: #fff; font-size: 21px; display: grid; place-items: center; margin-left: 36px; }
.dots { width: 8px; height: 28px; fill: currentColor; margin-left: 48px; }

.bookmarks { height: 70px; background: #3a3e37; border-bottom: 2px solid #4a4c47; display: flex; align-items: center; padding-left: 38px; font-size: 24px; }
.apps { width: 28px; height: 28px; }
.bookmarks .vsep { margin-left: 30px; margin-right: 35px; }
.bm { display: flex; align-items: center; flex: none; white-space: nowrap; letter-spacing: -.26px; }
.bm svg { width: 30px; height: 30px; margin-right: 13px; }
.bm.b1 { width: 302px; }
.bm.b1 svg { width: 20px; height: 24px; margin-right: 17px; }
.b2 { width: 146px; }
.b3 { width: 167px; }
.b4 { width: 309px; }
.bm.b4 svg, .bm.b8 svg { width: 32px; height: 32px; margin-right: 12px; }
.b5 { width: 308px; }
.b6 { width: 308px; }
.b7 { width: 307px; }
.bm.b5 svg, .bm.b6 svg, .bm.b7 svg { height: 26px; }
.bookmarks .vsep.end { margin-left: auto; margin-right: 32px; }
.folder { width: 32px; height: 26px; }
.all { margin: 0 29px 0 16px; width: 161px; white-space: nowrap; letter-spacing: -.2px; }

/* Login page */
.page { flex: none; height: 1646px; position: relative; background: linear-gradient(to bottom right, #10152a, #511e84 50%, #10152a); padding-top: 29px; font-family: "Liberation Sans", Arial, sans-serif; overflow: hidden; }
.blob { position: absolute; left: 2193px; top: 306px; width: 560px; height: 550px; background: radial-gradient(closest-side, rgba(66,8,74,.3), rgba(66,8,74,.25) 45%, rgba(66,8,74,.1) 75%, rgba(66,8,74,0)); }
.corner { position: absolute; top: 29px; width: 57px; height: 57px; border: 0 solid rgba(255,255,255,.2); border-top-width: 3px; }
.corner.tl { left: 29px; border-left-width: 3px; border-top-left-radius: 14px; }
.corner.tr { right: 29px; border-right-width: 3px; border-top-right-radius: 14px; }
.stars { position: absolute; left: 0; top: 0; width: 3024px; height: 1646px; }
.card { position: relative; width: 806px; height: 1480px; margin: 0 auto; padding: 58px 57px; border: 1px solid rgba(255,255,255,.2); border-radius: 43px; background: rgba(255,255,255,.11); box-shadow: 0 45px 90px -22px rgba(0,0,0,.5); font-size: 25.2px; line-height: 36px; color: #fff; }
.logo { width: 144px; height: 144px; margin: 0 auto; border-radius: 29px; background: linear-gradient(135deg, #ee9a4b, #e2736f 50%, #da5298); box-shadow: 0 18px 27px -5px rgba(0,0,0,.14); display: grid; place-items: center; }
.logo svg { width: 72px; height: 72px; }
h1 { font-size: 54px; line-height: 65px; margin-top: 43px; text-align: center; }
.sub { margin-top: 14px; text-align: center; color: rgba(255,255,255,.7); }
.demo { margin-top: 58px; height: 153px; border: 1px solid rgba(96,140,240,.42); border-radius: 21px; background: rgba(66,112,240,.25); text-align: center; font-size: 21.600px; line-height: 29px; color: #c3d9fa; padding-top: 20px; }
.demo-btn { width: 262px; height: 65px; margin: 15px auto 0; border: 1px solid rgba(96,150,245,.45); border-radius: 11px; line-height: 62px; background: rgba(66,120,236,.18); }
.label { margin-top: 47px; color: rgba(255,255,255,.8); }
.field { margin-top: 18px; height: 86px; border: 1px solid rgba(255,255,255,.2); border-radius: 21px; background: rgba(255,255,255,.1); display: flex; align-items: center; padding: 0 21px; color: rgba(255,255,255,.4); }
.field svg { width: 29px; height: 29px; fill: none; stroke: rgba(255,255,255,.42); stroke-width: 1.800; stroke-linecap: round; stroke-linejoin: round; }
.field span { margin-left: 22px; }
.field .lock { stroke-width: 1.600; }
.field .eye { margin-left: auto; stroke: rgba(255,255,255,.5); }
.row { margin-top: 43px; display: flex; align-items: center; color: rgba(255,255,255,.7); }
.check { width: 29px; height: 29px; border: 2px solid #767676; border-radius: 5px; background: #fff; }
.row span { margin-left: 14px; }
a { color: #6ba2f5; }
.row a { margin-left: auto; }
.signin { margin-top: 44px; height: 72px; border-radius: 21px; background: linear-gradient(90deg, #4c82f0, #8a35e0); line-height: 72px; text-align: center; }
.or { margin-top: 43px; text-align: center; color: rgba(255,255,255,.5); background: linear-gradient(rgba(255,255,255,.2), rgba(255,255,255,.2)) 0 16px / 100% 2px no-repeat; }
.social { margin-top: 43px; display: grid; grid-template-columns: 1fr 1fr; gap: 22px; }
.social div { height: 72px; border: 1px solid rgba(255,255,255,.2); border-radius: 21px; background: rgba(255,255,255,.1); display: flex; align-items: center; justify-content: center; gap: 29px; }
.social svg { width: 27px; height: 27px; fill: #fff; overflow: visible; }
.social .tw { width: 29px; height: 29px; }
.foot { margin-top: 47px; text-align: center; color: rgba(255,255,255,.7); }

/* Dock tooltip */
.tip { position: absolute; left: 1932px; top: 1726px; width: 200px; height: 52px; border-radius: 10px; background: #a090ba; color: #1e1827; font-size: 27px; line-height: 52px; text-align: center; letter-spacing: .2px; box-shadow: 0 2px 8px rgba(0,0,0,.35); }
.tip svg { position: absolute; left: 82px; top: 51px; width: 36px; height: 17px; fill: #a090ba; }

/* Dock */
.dock { position: absolute; left: 17px; top: 1834px; width: 2990px; height: 120px; border: 2px solid rgba(255,255,255,.2); border-radius: 36px; display: flex; align-items: flex-end; padding-bottom: 27px; background: linear-gradient(95deg, #8a64ac 0, #935fc5 7%, #9160c4 13%, #8b60b9 25%, #8262aa 37%, #80649f 50%, #765f99 60%, #6e6090 75%, #676286 86%, #5f667d 100%) border-box; box-shadow: 0 0 12px rgba(0,0,0,.25); }
.app { flex: none; position: relative; width: 72px; height: 73px; }
.app > svg { width: 100%; height: 100%; overflow: visible; filter: drop-shadow(0 1px 2px rgba(0,0,0,.3)); }
.petals ellipse { mix-blend-mode: multiply; opacity: .95; }
.run { position: absolute; left: 50%; bottom: -25px; width: 8px; height: 8px; margin-left: -5px; border-radius: 50%; background: #0b0030; }
.g16 { margin-left: 16px; }
.g24 { margin-left: 24px; width: 74px; }
.g26 { margin-left: 26px; }
.g28 { margin-left: 28px; }
.facetime { margin-left: 25px; width: 73px; }
.contacts { margin-left: 29px; width: 75px; }
.reminders { margin-left: 22px; }
.sublime { margin-left: 26px; width: 74px; height: 75px; }
.settings { margin-left: 25px; width: 83px; height: 84px; margin-bottom: 1px; }
.ws { margin-left: 30px; width: 96px; height: 96px; margin-bottom: 2px; }
.pc { margin-left: 31px; width: 100px; height: 100px; margin-bottom: 3px; }
.shot { margin-left: 30px; width: 98px; height: 98px; margin-bottom: 3px; }
.term { margin-left: 31px; width: 90px; height: 90px; margin-bottom: 2px; }
.whats { margin-left: 28px; width: 78px; height: 78px; }
.ij { margin-left: 25px; width: 74px; }
.tele { margin-left: 33px; }
.thumb { margin-left: 27px; width: 84px; height: 78px; margin-bottom: -3px; }
.trash { margin-left: 25px; width: 66px; height: 84px; margin-bottom: -3px; }
.dsep { width: 2px; height: 88px; margin-bottom: -13px; background: #2c2850; }
.s1 { margin-left: 36px; }
.s2 { margin-left: 35px; }
.badge { position: absolute; left: 58px; top: -11px; width: 40px; height: 40px; border-radius: 50%; background: #e04c3f; color: #fff; font-weight: 400; font-size: 23px; line-height: 40px; text-align: center; }
.cal-m { font: 600 16px Inter, sans-serif; fill: #fff; text-anchor: middle; }
.cal-d { font: 300 46px Inter, sans-serif; fill: #222; text-anchor: middle; letter-spacing: -2px; }
.jb { font: 700 33px Inter, sans-serif; fill: #fff; }
.ijt { font: 700 24px "Liberation Mono", monospace; letter-spacing: -3px; }
```
